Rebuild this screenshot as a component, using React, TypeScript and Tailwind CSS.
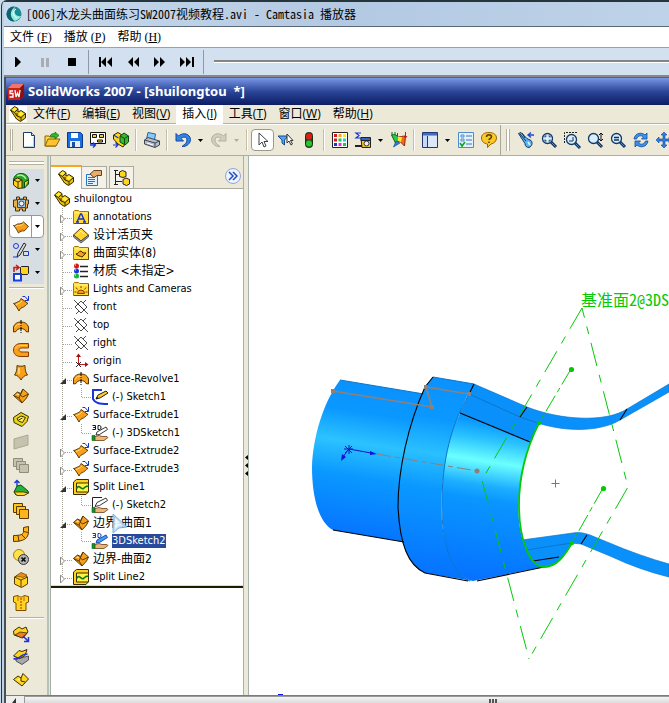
import { memo, type ReactNode } from "react";

const GOLD = "#ffc61a";
const ORANGE = "#f9a01b";
const EDGE = "#5a3a00";

const surface = (
    <>
        <path d="M.5 6.500c1.500.5 2.500-1 4-1.500 3 0 4.500-.5 6-2l5 4.500c-2 1-2.500 3.500-4.500 4.500-2-.5-4 .5-5.500 2C4.500 12 3 9 .5 6.500z" fill={ORANGE} stroke={EDGE} />
        <path d="M2.500 7.500L5 6.500c3 0 4.500-.5 5.500-2" stroke="#ffdc8a" fill="none" />
        <path d="M6 12c1.500-1 3-1.500 4.500-1" stroke="#d96f00" fill="none" />
    </>
);

const boundary = (
    <>
        <path d="M.5 7.500l4-3.500 3 1.500L10 1l5.500 5-2 4-4.500 5-3.500-3z" fill={ORANGE} stroke={EDGE} />
        <path d="M.5 7.500L6 10l4-9M6 10l3 4.500M4.500 4l5 5 6-3" fill="none" stroke={EDGE} />
        <path d="M3 7l2-2 1.500 2z" fill="#ffe08a" />
    </>
);

const revolve = (
    <>
        <path d="M.5 13V8c1-3.500 4-5 7.500-5s6.500 1.500 7.500 5v5l-2.500-.5c-.5-2-3-3-5-3s-4.500 1-5 3z" fill={ORANGE} stroke={EDGE} />
        <path d="M2 8.500C3.500 5.500 5.500 5 8 5" stroke="#ffe08a" fill="none" />
        <path d="M8 1v13" stroke="#000" strokeDasharray="4 1 1 1" />
    </>
);

const splitLine = (
    <>
        <path d="M.5 3l3-2.500h12v12l-2.500 3H.5z" fill="#ffd21f" stroke="#3a2c00" />
        <path d="M3.500 4h12v9h-12z" fill="#fff04a" stroke="#3a2c00" />
        <path d="M3.500 9.500c3-5 5 2 7 0s2-2.500 5-2.500" stroke="#0a7a1a" strokeWidth="1.600" fill="none" />
    </>
);

const partBlock = (
    <>
        <path d="M.5 4l4-3.500L8 2.500v3.500l3-1.500 4.500 3v4.500l-5 3.500-4-2.500z" fill="#e8bd0c" stroke="#352900" />
        <path d="M1.500 4L5 1.500 7 3 4 5.500zM8 8l3-2.500L14 8l-3 2.500z" fill="#ffee3a" />
        <path d="M.5 4l4 2.500L8 3M4.500 6.500L7 10l4 1.500 4.500-4M11 11.500v3.500M7 10V7" fill="none" stroke="#352900" />
    </>
);

const folder = (
    <>
        <path d="M.5 14.500v-12l1-1h4l1 1h9v12z" fill="#ffdd33" stroke="#a87900" />
        <path d="M1.500 4h13" stroke="#fff6a8" />
        <path d="M15.500 3v11.500H1" fill="none" stroke="#6b4c00" />
    </>
);

const hand = (
    <>
        <path d="M0 10.500h3v5H0z" fill="#0c9a2c" stroke="#035b15" strokeWidth=".6" />
        <path d="M3 11.500l4-1 3 1h5l1 1-4 3H3z" fill="#e9b77c" stroke="#6d3f12" strokeWidth=".8" />
    </>
);

const mark3d = (
    <path d="M.5.5h3v2h-2 2v2h-3M6 .5v4h1.500l1.500-1v-2l-1.500-1z" fill="none" stroke="currentColor" />
);

const lens = (
    <>
        <path d="M10 10l5 5" stroke="#12315f" strokeWidth="3" />
        <path d="M10.500 10.500l4 4" stroke="#4f8fd8" strokeWidth="1" />
        <circle cx="6.500" cy="6.500" r="5" fill="#d8eefc" stroke="#123a66" strokeWidth="1.300" />
    </>
);

const icons = {
    part: partBlock,
    surface,
    boundary,
    revolve,
    splitLine,
    extrude: (
        <>
            <path d="M.5 7.500c2 0 3.500-1.500 5-2 1.500-.5 2-1.500 2.500-3l7 5c-2 .5-2.500 2.500-4.500 3.500-2 .5-3.500 1.500-4.500 4C4.500 12.500 3 9.500.5 7.500z" fill={ORANGE} stroke={EDGE} />
            <path d="M3 8.500c2-.5 5-2 6-3.500" stroke="#ffdc8a" fill="none" />
            <path d="M9.500.5H12l3 3.500M15.500 0v4.500H12" fill="none" stroke="#1434c8" />
        </>
    ),
    annotations: (
        <>
            {folder}
            <path d="M4 13l3.500-8h1L12 13M5.500 10h5M3 13h3M10 13h3" fill="none" stroke="#1a2fd0" strokeWidth="1.400" />
        </>
    ),
    binder: (
        <>
            <path d="M.5 8L8 1l7.500 7L8 14z" fill="#ffd42e" stroke={EDGE} />
            <path d="M.5 8v2L8 16l7.500-6V8L8 14z" fill="#999" stroke="#444" strokeWidth=".8" />
            <path d="M4 8l4-4 3 3" stroke="#fff3a5" fill="none" />
        </>
    ),
    bodies: (
        <>
            {folder}
            <path d="M3 9c2 0 3-3 5-3 1 2 3 2 5 2-2 1-2 3-4 4-2-1-4-1-6-3z" fill={ORANGE} stroke="#3a2000" />
        </>
    ),
    material: (
        <>
            <circle cx="3.500" cy="3" r="2.500" fill="#d81818" />
            <circle cx="3.500" cy="8" r="2.500" fill="#2433d8" />
            <circle cx="3.500" cy="13" r="2.500" fill="#12b83a" />
            <path d="M7 3.500h8M7 8.500h8M7 13.500h8" stroke="#222" strokeWidth="1.500" />
            <path d="M2 2h1M2 7h1M2 12h1" stroke="#fff" />
        </>
    ),
    lights: (
        <>
            {folder}
            <path d="M4.500 12.500a3.500 3.500 0 017 0zM8 7V5M4.500 8.500l-1.500-2M11.500 8.500l1.500-2M3.500 11H1.500M12.500 11h2" fill="#ff9a1f" stroke="#8a3b00" />
        </>
    ),
    plane: (
        <path d="M1 1l14 14M8 2l6 6-6 6-6-6zM5 5l6 6M13 1l-3 3M3 15l3-3" fill="none" stroke="#222" strokeWidth=".8" />
    ),
    origin: (
        <>
            <path d="M5.500 11V2M6 11.500h8" stroke="#c41c1c" fill="none" />
            <path d="M3 4l2.500-3.500L8 4zM12 9l3.500 2.500L12 14z" fill="#9c1010" />
            <path d="M3 9l5 5M8 9l-5 5" stroke="#222" />
        </>
    ),
    sketchActive: (
        <>
            <path d="M10 1H1v9c2 4 6 5 15 5" fill="none" stroke="#1c36d6" strokeWidth="2" />
            <path d="M4 10l2-4 8-4 2 2-8 5z" fill="#ffc928" stroke="#222" />
            <path d="M4 10l1-2 1.500 1z" fill="#000" />
        </>
    ),
    sketch: (
        <>
            <path d="M10 .5H.5V11" fill="none" stroke="#222" />
            {hand}
            <path d="M3 9.500l2-4 9-4.500 1.500 2.500-8 5z" fill="#fff" stroke="#222" strokeWidth=".9" />
        </>
    ),
    sketch3d: (
        <g color="#111">
            {mark3d}
            {hand}
            <path d="M4 10l1-3 9-5 1.500 2.500-8 5z" fill="#fff" stroke="#222" strokeWidth=".9" />
        </g>
    ),
    sketch3dActive: (
        <g color="#1438a8">
            {mark3d}
            {hand}
            <path d="M4 10l1-3 9-5 1.500 2.500-8 5z" fill="#3aa0f8" stroke="#153ca8" strokeWidth=".9" />
        </g>
    ),
    newDoc: (
        <>
            <path d="M2.500.5h8l3 3v12h-11z" fill="#fff" stroke="#1f3b6e" />
            <path d="M10.500.5v3h3" fill="#bcd4f4" stroke="#1f3b6e" />
            <path d="M12.500 5v9.500h-9" fill="none" stroke="#b9d3ee" />
        </>
    ),
    open: (
        <>
            <path d="M1 14V4h4l1 1h6v9z" fill="#ffd84a" stroke="#8a6400" />
            <path d="M1 14l3-7h12l-4 7z" fill="#ffc230" stroke="#8a6400" />
            <path d="M6 4c1-2 3-3 5-2V0l4 3.500L11 7V5c-2-1-3 0-5-1z" fill="#2cbb2c" stroke="#08700e" strokeWidth=".7" />
        </>
    ),
    save: (
        <>
            <path d="M.5.5h13l2 2v13H.5z" fill="#1c6fe0" stroke="#0b3a8c" />
            <path d="M4 1h7v5H4z" fill="#fff" />
            <path d="M3 9h10v6H3z" fill="#e8eef8" />
            <path d="M5 10h3v5H5z" fill="#1c4ea8" />
        </>
    ),
    drawing: (
        <>
            <path d="M.5.5h15v11H.5z" fill="#fff" stroke="#111" />
            <path d="M2.500 2.500h4v3h-4zM9.500 2.500h4v3h-4zM7.500 8h5v2h-5z" fill="#ffd019" stroke="#111" />
            <path d="M0 13h5M3 10.500L5.500 13 3 15.500" stroke="#1639d8" fill="none" strokeWidth="1.400" />
        </>
    ),
    assembly: (
        <>
            <path d="M.5 3L5 .5 9 3v6l4 2-3 4-5-3-4.500-5z" fill="#ffd61f" stroke="#352900" />
            <path d="M7 4l4-3 4.500 3v6L12 13 7 10z" fill="#37b735" stroke="#0c4b10" />
            <path d="M7 4l4.500 2.500 4-2.500M11.500 6.500V13" fill="none" stroke="#0c4b10" />
            <path d="M.5 3l5 3M0 13h4M2.500 10.500L5 13l-2.500 2.500" stroke="#1639d8" fill="none" strokeWidth="1.200" />
        </>
    ),
    print: (
        <>
            <path d="M2.500 7L4 .5 11.500 2l-1 6z" fill="#8fc7f8" stroke="#2263a8" />
            <path d="M.5 8L4 5.500 15.500 9v4L11 15.500.5 12z" fill="#b7bec9" stroke="#3c4654" />
            <path d="M.5 8L11 11l4.500-2M11 11v4" stroke="#3c4654" fill="none" />
            <path d="M3 11l6 2" stroke="#fff" />
        </>
    ),
    undo: (
        <path d="M1 1.500v7.500h7.500L6 6.500C8 4.500 12 4.500 12 8c0 3-2 4-5 6.500C12 15 15.500 11 15.500 7.500 15 1.500 8 0 3.500 4z" fill="#2f85e8" stroke="#14479c" />
    ),
    redo: (
        <path d="M15 1.500v7.500H7.500L10 6.500C8 4.500 4 4.500 4 8c0 3 2 4 5 6.500C4 15 .5 11 .5 7.500 1 1.500 8 0 12.500 4z" fill="#d1ceba" stroke="#b3b09d" />
    ),
    select: (
        <path d="M4 1v12l3-3 2 5 2-1-2-4.500h4z" fill="#fff" stroke="#3b4046" />
    ),
    filter: (
        <>
            <path d="M0 4h10L6.500 8v5L4 11V8z" fill="#4ea5f2" stroke="#164a94" />
            <path d="M9 2v9l2-2 2 4 1.500-1-2-3.500H15z" fill="#fff" stroke="#333" />
        </>
    ),
    traffic: (
        <>
            <rect x="4.500" y=".5" width="7" height="15" rx="3" fill="#234b21" stroke="#19301a" />
            <circle cx="8" cy="4.500" r="3" fill="#e81b13" />
            <circle cx="8" cy="11.500" r="3" fill="#23c92b" />
        </>
    ),
    palette: (
        <>
            <path d="M.5.5h15v15H.5z" fill="#fff" stroke="#222" />
            <path d="M2 3.500h3M2 8h3" stroke="#d01b1b" strokeWidth="3" />
            <path d="M6.500 3.500h3" stroke="#ff9a1c" strokeWidth="3" />
            <path d="M11 3.500h3" stroke="#ffe81c" strokeWidth="3" />
            <path d="M6.500 8h3M11 12.500h3" stroke="#19c845" strokeWidth="3" />
            <path d="M11 8h3" stroke="#1bcdf0" strokeWidth="3" />
            <path d="M2 12.500h3" stroke="#2a2ce0" strokeWidth="3" />
            <path d="M6.500 12.500h3" stroke="#df2bdf" strokeWidth="3" />
        </>
    ),
    measure: (
        <>
            <path d="M6 1H1l3 2.500L1 6h5" fill="none" stroke="#1a35d6" strokeWidth="1.200" />
            <path d="M6 6.500h9.500v9H7z" fill="#fbc71c" stroke="#222" />
            <path d="M6 5.500h9.500v3H6z" fill="#2b66c8" stroke="#222" />
            <circle cx="11.500" cy="11.500" r="2.500" fill="#eee" stroke="#333" />
            <path d="M0 14h7" stroke="#222" strokeWidth="2" />
        </>
    ),
    analysis: (
        <>
            <path d="M.5 3c3-1 5 0 7 2l1 4-4 2z" fill="#2cc84a" stroke="#0b6a1d" />
            <path d="M7.500 5c2 0 4-1 7-1l-1 10-4-4-2-1z" fill="#f36b1c" stroke="#8c2600" />
            <path d="M7 5l4 0-1 5-3-1z" fill="#ffe52c" />
            <path d="M5 9l-2.500 6L9 11z" fill="#2480e8" stroke="#123f8c" strokeWidth=".6" />
            <path d="M1 0v3M4 0v3M6.500 1v3" stroke="#0b6a1d" />
            <path d="M14.500 0v6M13 4l1.500 2L16 4" stroke="#c81818" fill="none" />
        </>
    ),
    windowPane: (
        <>
            <path d="M.5.5h15v15H.5z" fill="#c6daf6" stroke="#24376e" />
            <path d="M1 1h14v2.500H1z" fill="#3f6dc2" />
            <path d="M5.500 4v11" stroke="#24376e" />
            <path d="M6 4h9v11H6z" fill="#dce8fa" />
        </>
    ),
    options: (
        <>
            <path d="M.5.5h15v15H.5z" fill="#e3f1fd" stroke="#4f8ccc" />
            <path d="M3 3h3v2H3zM3 7h3v2H3z" fill="none" stroke="#4f8ccc" />
            <path d="M8 4h6M8 8h6M8 12h6" stroke="#3b78bb" />
            <path d="M2 11l2 3 3-4" fill="none" stroke="#12a024" strokeWidth="1.600" />
        </>
    ),
    help: (
        <>
            <path d="M8 .5c5 0 7.500 2.500 7.500 5.500S13 11.500 10 12l-3.500 3.500V12C3 11.500.5 9.500.5 6S3 .5 8 .5z" fill="#fac827" stroke="#9a6800" />
            <path d="M5.500 5c0-3 5-3 5 0 0 1.500-2.500 1.500-2.500 3M8 9.500V11" fill="none" stroke="#5a3c00" strokeWidth="1.500" />
        </>
    ),
    torch: (
        <>
            <path d="M.5 1.500L3 .5l6 6 4 2c2 2 1 6-2 7-2 0-4-1-4-4z" fill="#5ab3f2" stroke="#12365f" />
            <path d="M2 2l6 7M4 1l3 5" stroke="#12365f" />
            <path d="M10 10l2 3" stroke="#e3f5ff" strokeWidth="1.500" />
            <path d="M16 3h-5.500M13 .5L10 3l3 2.500" stroke="#1b49d0" fill="none" strokeWidth="1.400" />
        </>
    ),
    zoomFit: (
        <>
            {lens}
            <path d="M4 5.500V4h1.500M7.500 4H9v1.500M9 7.500V9H7.500M5.500 9H4V7.500" fill="none" stroke="#12315f" />
        </>
    ),
    zoomArea: (
        <>
            <path d="M.5 11V.5H13" fill="none" stroke="#222" strokeDasharray="2 1" />
            <g transform="translate(1 1)">{lens}</g>
            <path d="M9 5v4H5" fill="none" stroke="#12315f" />
        </>
    ),
    zoomInOut: (
        <>
            {lens}
            <path d="M14 1v8M12 3l2-2 2 2M12 7l2 2 2-2" fill="none" stroke="#111" />
        </>
    ),
    zoomSel: (
        <>
            {lens}
            <path d="M4 5.500h5M4 8h5" stroke="#12315f" strokeWidth="1.500" />
        </>
    ),
    rotate: (
        <>
            <path d="M1 7C2 .5 9 0 12 3l2-2v6H8.500l2-2C8 3 5 3.500 3.500 7z" fill="#3b93ec" stroke="#124a9a" strokeWidth=".8" />
            <path d="M15 9c-1 6.500-8 7-11 4l-2 2V9h5.500l-2 2c2.500 2 5.500 1.500 7-2z" fill="#3b93ec" stroke="#124a9a" strokeWidth=".8" />
        </>
    ),
    pan: (
        <path d="M8 0l3 3H9v4h4V5l3 3-3 3V9H9v4h2l-3 3-3-3h2V9H3v2L0 8l3-3v2h4V3H5z" fill="#2f7fe0" stroke="#123f91" strokeWidth=".6" />
    ),
    features: (
        <>
            <path d="M.5 9C0 3 4 .5 8 .5c5 0 7.500 3 7.500 6.500v4l-4 4h-3V10z" fill="#29a52c" stroke="#0a4a0e" />
            <path d="M.5 7l4-2 4.500 2v8L5 15.500.5 12z" fill="#ffd21e" stroke="#3d2d00" />
            <path d="M.5 7L5 9l4-2M5 9v6" fill="none" stroke="#3d2d00" />
            <path d="M4 3c3-2 7-1 9 3" stroke="#b5f58c" strokeWidth="1.400" fill="none" />
            <path d="M11.500 15V9l4-2" stroke="#0a4a0e" fill="#ffd21e" />
        </>
    ),
    sheetMetal: (
        <>
            <path d="M.5 4h3V1h3v2h4V1h3v3h2v4h-1v4h-2v3h-3v-2h-3v2h-4v-4h-2z" fill="#eeb03c" stroke="#333" />
            <path d="M4.500 3.500h8v8h-8z" fill="#a4c6ea" stroke="#2a4876" />
            <circle cx="8.500" cy="7.500" r="2.500" fill="#eee" stroke="#444" />
        </>
    ),
    sketchTools: (
        <>
            <circle cx="3" cy="4" r="2.500" fill="none" stroke="#1d36d8" />
            <path d="M10.500 9.500h5v4h-5z" fill="none" stroke="#1d36d8" />
            <path d="M4 15l1-4 6-10 2 1.500L7 13z" fill="#ddd" stroke="#222" />
            <path d="M0 15h5" stroke="#1d36d8" />
        </>
    ),
    blocks: (
        <>
            <path d="M7.500 2.500l1-1h7v7l-1 1h-7z" fill="#ffd21e" stroke="#222" />
            <path d="M1 9h7v6.500H1z" fill="#fff" stroke="#1a3de0" strokeWidth="2" />
            <path d="M1 7V2.500h4M3 0l3 2.500L3 5" fill="none" stroke="#c81515" strokeWidth="1.500" />
        </>
    ),
    sweep: (
        <>
            <path d="M15.500 1.500H8c-5 0-7.500 3-7.500 6.500s2 6.500 7.500 6.500h7.500V10H9c-4 0-4-4 0-4h6.500z" fill={ORANGE} stroke="#8b3b00" />
            <path d="M14 3.500H8C4 3.500 3 5.500 2.500 7" fill="none" stroke="#ffd48a" />
        </>
    ),
    loft: (
        <>
            <path d="M4 .5c3 1 5 1 8 0 0 4 .5 7 2.500 9.500-3 0-5 2.500-6.500 5-1.500-2.500-3.500-5-6.500-5C3.500 7.500 4 4.500 4 .5z" fill={ORANGE} stroke={EDGE} />
            <path d="M6 3v6" stroke="#ffdc9a" strokeWidth="1.500" />
        </>
    ),
    offset: (
        <>
            <path d="M.5 6.500L8 1.500l7.500 4-1.500 5-5 5-8-4z" fill="#e8d41c" stroke="#3a3000" />
            <path d="M4 7.500l4-2.500 4.500 1.500-3 5-4-1.500z" fill="#ffef63" stroke="#3a3000" />
            <path d="M5.500 9l4-2" stroke="#3a3000" />
        </>
    ),
    planar: (
        <path d="M1 5l14-4v10L1 15z" fill="#c5c3ad" stroke="#aaa895" />
    ),
    knit: (
        <g fill="#c5c3ad" stroke="#8f8d7b">
            <path d="M.5 1.500h9v8h-9z" />
            <path d="M3.500 4.500h9v8h-9z" />
            <path d="M6.500 7.500h9v8h-9z" />
        </g>
    ),
    thicken: (
        <>
            <path d="M1 12l3-6 4-1 7 6 .5 2-4.500 2H3z" fill="#23b136" stroke="#0c4b17" />
            <path d="M1 12l3 3.500h7l4.500-2.500-5-1z" fill="#ffd61f" stroke="#3d2d00" strokeWidth=".8" />
            <path d="M4 6V1M1.500 3L4 .5 6.500 3" fill="none" stroke="#1737dc" strokeWidth="1.400" />
        </>
    ),
    stack: (
        <g fill={GOLD} stroke={EDGE}>
            <path d="M.5.5h9v9h-9z" />
            <path d="M3.500 3.500h9v8h-9z" />
            <path d="M6.500 6.500h9v9h-9z" fill="#ffb31c" />
        </g>
    ),
    bend: (
        <>
            <path d="M15.500.5l-5 1v4c0 3-3 4-10 4v6c10 0 15-3 15-10z" fill="#ffb31c" stroke={EDGE} />
            <path d="M10.500 5.500l5 1M8.500 8.500l4 4M5 9.500l1 6" stroke={EDGE} />
        </>
    ),
    deleteFace: (
        <>
            <circle cx="6" cy="6" r="5.500" fill="#ffe24a" stroke="#a88000" />
            <circle cx="10.500" cy="10.500" r="5" fill="#b5b5b5" stroke="#333" />
            <path d="M8.500 8.500l4 4M12.500 8.500l-4 4" stroke="#000" strokeWidth="1.500" />
        </>
    ),
    box: (
        <>
            <path d="M1.500 5l7-4 6 4v7l-6 3.500-7-3.500z" fill="#ffd31f" stroke={EDGE} />
            <path d="M1.500 5L8 8l6.500-3M8 8v7" fill="none" stroke={EDGE} />
            <path d="M3 4l5-3.500L14 3l-4 2.500z" fill="#f48a1a" stroke={EDGE} strokeWidth=".6" />
        </>
    ),
    shirt: (
        <>
            <path d="M.5 1.500L5 .5c2 2 4 2 6 0l4.500 1V7L13 8v7.500H3V8L.5 7z" fill="#ffd61f" stroke="#7b4b00" />
            <path d="M8 3v12" stroke="#cf5c00" strokeWidth="1.500" strokeDasharray="2 1" />
            <path d="M5 1v5M11 1v5" stroke="#cf5c00" />
        </>
    ),
    extend: (
        <>
            <path d="M.5 5L6 1l3 2 4-2 2 5-5 6-9-3z" fill="#ffd61f" stroke="#3d2d00" />
            <path d="M2 9l5-3 7 1-5 5z" fill="#f07f1c" stroke="#3d2d00" strokeWidth=".8" />
            <path d="M10 10l5 5M15.500 11v4.500H11" fill="none" stroke="#2433d8" strokeWidth="1.500" />
        </>
    ),
    trim: (
        <>
            <path d="M3 8l5 1 7.500-2v4L9 15.500 3 12z" fill="#a8a8a8" stroke="#555" />
            <path d="M.5 7L6 1.500l3 1 5-2-2 6-5 3z" fill="#ffd61f" stroke="#3d2d00" />
            <path d="M.5 9.500c6 3 5-4.500 14-4.500" fill="none" stroke="#2433d8" strokeWidth="1.500" />
        </>
    ),
    untrim: (
        <>
            <path d="M.5 7.500L5 4l3 2 2-4.500 5.500 5.500L9 14z" fill="#ffd61f" stroke="#3d2d00" />
            <path d="M8 6v3l4 1" fill="none" stroke="#3d2d00" />
            <path d="M4 8l3-2v3z" fill="#fff59a" />
        </>
    ),
    props: (
        <>
            <path d="M.5 4.500h11v11H.5z" fill="#e2f1ff" stroke="#2573c4" />
            <path d="M2 7.500h7M2 9.500h7M2 11.500h7M2 13.500h5" stroke="#2573c4" />
            <path d="M4 4l4-3.500h7.500v5H11L8 7.500z" fill="#e5ad72" stroke="#6d3f12" />
        </>
    ),
    config: (
        <>
            <path d="M1.500 0v15M1 4.500h6M1 11.500h7M0 .5h4M0 14.500h4" stroke="#222" fill="none" />
            <path d="M5.500 2l3-1.500 3.500 1.500v4.500l-3 1-3.500-1zM9 9.500L12 8l3.500 1.500v4.500l-3 1.500L9 14z" fill="#ffd61f" stroke="#222" />
        </>
    ),
    play: <path d="M5 3h1l5 5-5 5H5z" fill="#000" />,
    pause: <path d="M4 4h3v9H4zM9 4h3v9H9z" fill="#a9adb3" />,
    stop: <path d="M4 4h8v8H4z" fill="#000" />,
    first: <path d="M1 3h2v10H1zM8 3v10L3 8zM14 3v10L9 8z" fill="#000" />,
    rewind: <path d="M8 3v10L3 8zM14 3v10L9 8z" fill="#000" />,
    forward: <path d="M2 3v10l5-5zM8 3v10l5-5z" fill="#000" />,
    last: <path d="M1 3v10l5-5zM7 3v10l5-5zM13 3h2v10h-2z" fill="#000" />,
} satisfies Record<string, ReactNode>;

type IconName = keyof typeof icons;

function Icon({ name }: { name: IconName }) {
    return (
        <svg viewBox="0 0 16 16" className="size-4 shrink-0 overflow-visible" aria-hidden="true">
            {icons[name]}
        </svg>
    );
}

function Caret() {
    return (
        <svg viewBox="0 0 5 3" className="h-[3px] w-[5px]" aria-hidden="true">
            <path d="M0 0h5L2.500 3z" fill="#000" />
        </svg>
    );
}

function ToolSep() {
    return (
        <div className="flex h-[22px] w-2 shrink-0 justify-center">
            <div className="w-px bg-[#c2bfac]" />
            <div className="w-px bg-white" />
        </div>
    );
}

interface Tool {
    icon?: IconName;
    label?: string;
    menu?: boolean;
    active?: boolean;
}

const mainTools: Tool[] = [
    { icon: "newDoc", label: "New" },
    { icon: "open", label: "Open" },
    { icon: "save", label: "Save" },
    { icon: "drawing", label: "Make drawing" },
    { icon: "assembly", label: "Make assembly" },
    {},
    { icon: "print", label: "Print" },
    {},
    { icon: "undo", label: "Undo", menu: true },
    { icon: "redo", label: "Redo", menu: true },
    {},
    { icon: "select", label: "Select", active: true },
    { icon: "filter", label: "Selection filter" },
    { icon: "traffic", label: "Rebuild" },
    {},
    { icon: "palette", label: "Edit color" },
    { icon: "measure", label: "Measure", menu: true },
    { icon: "analysis", label: "Analysis" },
    {},
    { icon: "windowPane", label: "Window", menu: true },
    { icon: "options", label: "Options" },
    { icon: "help", label: "Help" },
];

const viewTools: Tool[] = [
    { icon: "torch", label: "Previous view" },
    { icon: "zoomFit", label: "Zoom to fit" },
    { icon: "zoomArea", label: "Zoom to area" },
    { icon: "zoomInOut", label: "Zoom in/out" },
    { icon: "zoomSel", label: "Zoom to selection" },
    { icon: "rotate", label: "Rotate view" },
    { icon: "pan", label: "Pan" },
];

function ToolRow({ tools }: { tools: Tool[] }) {
    return (
        <>
            {tools.map((tool, i) =>
                tool.icon ? (
                    <div key={i} className="flex shrink-0">
                        <button
                            aria-label={tool.label}
                            className={
                                tool.active
                                    ? "flex h-[22px] w-[23px] items-center justify-center rounded-sm border border-[#9a9a8c] bg-white"
                                    : "flex h-[22px] w-[23px] items-center justify-center"
                            }
                        >
                            <Icon name={tool.icon} />
                        </button>
                        {tool.menu && (
                            <button
                                aria-label={`${tool.label} menu`}
                                className={
                                    tool.icon === "redo"
                                        ? "flex w-[13px] items-center justify-center opacity-25"
                                        : "flex w-[13px] items-center justify-center"
                                }
                            >
                                <Caret />
                            </button>
                        )}
                    </div>
                ) : (
                    <ToolSep key={i} />
                )
            )}
        </>
    );
}

const sideGroups: { icon: IconName; label: string; active?: boolean }[] = [
    { icon: "features", label: "Features" },
    { icon: "sheetMetal", label: "Sheet metal" },
    { icon: "surface", label: "Surfaces", active: true },
    { icon: "sketchTools", label: "Sketch" },
    { icon: "blocks", label: "Blocks" },
];

const sideTools: IconName[] = [
    "extrude",
    "revolve",
    "sweep",
    "loft",
    "boundary",
    "offset",
    "planar",
    "knit",
    "thicken",
    "stack",
    "bend",
    "deleteFace",
    "box",
    "shirt",
];

const sideEditTools: IconName[] = ["extend", "trim", "untrim"];

interface TreeNode {
    icon: IconName;
    label: string;
    level: 1 | 2;
    open?: boolean;
    selected?: boolean;
    cjk?: boolean;
}

const treeNodes: TreeNode[] = [
    { icon: "annotations", label: "annotations", level: 1, open: false },
    { icon: "binder", label: "设计活页夹", level: 1, open: false, cjk: true },
    { icon: "bodies", label: "曲面实体(8)", level: 1, open: false, cjk: true },
    { icon: "material", label: "材质 <未指定>", level: 1, cjk: true },
    { icon: "lights", label: "Lights and Cameras", level: 1, open: false },
    { icon: "plane", label: "front", level: 1 },
    { icon: "plane", label: "top", level: 1 },
    { icon: "plane", label: "right", level: 1 },
    { icon: "origin", label: "origin", level: 1 },
    { icon: "revolve", label: "Surface-Revolve1", level: 1, open: true },
    { icon: "sketchActive", label: "(-) Sketch1", level: 2 },
    { icon: "extrude", label: "Surface-Extrude1", level: 1, open: true },
    { icon: "sketch3d", label: "(-) 3DSketch1", level: 2 },
    { icon: "extrude", label: "Surface-Extrude2", level: 1, open: false },
    { icon: "extrude", label: "Surface-Extrude3", level: 1, open: false },
    { icon: "splitLine", label: "Split Line1", level: 1, open: true },
    { icon: "sketch", label: "(-) Sketch2", level: 2 },
    { icon: "boundary", label: "边界-曲面1", level: 1, open: true, cjk: true },
    { icon: "sketch3dActive", label: "3DSketch2", level: 2, selected: true },
    { icon: "boundary", label: "边界-曲面2", level: 1, open: false, cjk: true },
    { icon: "splitLine", label: "Split Line2", level: 1, open: false },
];

function labelClass(node: TreeNode) {
    if (node.selected) return "ml-1 bg-[#264a9c] leading-[14px] whitespace-nowrap text-white";
    if (node.cjk) return "ml-1 text-xs leading-[14px] whitespace-nowrap";
    return "ml-1 leading-[14px] whitespace-nowrap";
}

function Branch({ node, last }: { node: TreeNode; last: boolean }) {
    return (
        <svg
            viewBox="0 0 19 18"
            className="h-[18px] w-[19px] shrink-0"
            fill="none"
            stroke="#a8a49a"
            strokeDasharray="1 1"
            aria-hidden="true"
        >
            <path d={last ? "M8.500 0v10" : "M8.500 0v18"} />
            {node.level === 1 && <path d="M9 10.500h10" />}
            {node.open === false && (
                <path d="M6.500 7v8l4-4z" fill="#fff" stroke="#8b8b8b" strokeDasharray="none" />
            )}
            {node.open === true && <path d="M12 8v6H6z" fill="#333" stroke="none" />}
        </svg>
    );
}

const TreeRow = memo(function TreeRow({ node, last }: { node: TreeNode; last: boolean }) {
    return (
        <li
            role="treeitem"
            aria-expanded={node.open}
            aria-selected={!!node.selected}
            className="relative flex h-[18px] items-center"
        >
            <Branch node={node} last={last} />
            {node.level === 2 && (
                <svg
                    viewBox="0 0 19 18"
                    className="h-[18px] w-[19px] shrink-0"
                    fill="none"
                    stroke="#a8a49a"
                    strokeDasharray="1 1"
                    aria-hidden="true"
                >
                    <path d="M8.500 0v10M9 9.500h10" />
                </svg>
            )}
            <Icon name={node.icon} />
            <button className={labelClass(node)}>{node.label}</button>
            {node.label === "边界-曲面1" && (
                <svg viewBox="0 0 18 20" className="absolute top-0 left-14 z-10 h-5 w-[18px] opacity-90" aria-hidden="true">
                    <path d="M3 0l14 13-8 1-6 5z" fill="#b9dcf6" stroke="#6ea8dc" />
                    <path d="M5 4l7 7-4 1-3 3z" fill="#e9f6ff" />
                </svg>
            )}
        </li>
    );
});

function Menu({ items }: { items: { text: string; hotkey: string; active?: boolean }[] }) {
    return (
        <>
            {items.map((item) => (
                <button
                    key={item.text}
                    className={
                        item.active
                            ? "h-[19px] bg-white px-1.5 whitespace-nowrap"
                            : "h-[19px] px-1.5 whitespace-nowrap"
                    }
                >
                    {item.text}(<u>{item.hotkey}</u>)
                </button>
            ))}
        </>
    );
}

function PlayerButtons({ names }: { names: IconName[] }) {
    return (
        <>
            {names.map((name) => (
                <button key={name} aria-label={name} className="flex h-6 w-[27px] shrink-0 items-center justify-center">
                    <Icon name={name} />
                </button>
            ))}
        </>
    );
}

function SideButtons({ names }: { names: IconName[] }) {
    return (
        <>
            {names.map((name) => (
                <button key={name} aria-label={name} className="flex h-[23px] w-6 items-center justify-center">
                    <Icon name={name} />
                </button>
            ))}
        </>
    );
}

function Model() {
    return (
        <svg
            viewBox="249 156 420 539"
            preserveAspectRatio="xMinYMin meet"
            className="h-[539px] w-full"
            role="img"
            aria-label="shuilongtou"
        >
            <defs>
                <linearGradient id="barrel" gradientUnits="userSpaceOnUse" x1="372" y1="386" x2="348" y2="538">
                    <stop offset="0" stopColor="#0a92ff" />
                    <stop offset=".18" stopColor="#0a98ff" />
                    <stop offset=".38" stopColor="#2cc2ff" />
                    <stop offset=".6" stopColor="#0a98ff" />
                    <stop offset="1" stopColor="#0672ff" />
                </linearGradient>
                <linearGradient id="collar" gradientUnits="userSpaceOnUse" x1="450" y1="380" x2="422" y2="575">
                    <stop offset="0" stopColor="#0a92ff" />
                    <stop offset=".2" stopColor="#0a98ff" />
                    <stop offset=".38" stopColor="#2ac0ff" />
                    <stop offset=".56" stopColor="#0a98ff" />
                    <stop offset="1" stopColor="#0672ff" />
                </linearGradient>
                <linearGradient id="cone" gradientUnits="userSpaceOnUse" x1="506" y1="408" x2="480" y2="580">
                    <stop offset="0" stopColor="#0a92ff" />
                    <stop offset=".1" stopColor="#0a9aff" />
                    <stop offset=".2" stopColor="#2cc4ff" />
                    <stop offset=".32" stopColor="#6cffff" />
                    <stop offset=".46" stopColor="#1caeff" />
                    <stop offset=".54" stopColor="#0a96ff" />
                    <stop offset="1" stopColor="#0672ff" />
                </linearGradient>
            </defs>

            {/* spout, upper and lower walls */}
            <path d="M474 384L527 407C560 420 605 423 627 409L669 384V392L620 420C600 432 565 432 538 423L530 442L460 413Z" fill="#0a90fb" stroke="#0877cc" strokeWidth=".7" />
            <path d="M522 540L573 533C580 532 584 533 590 535L607 542Q640 556 669 564V577Q640 570 610 556L581 544L572 543C565 556 555 567 544 567C534 567 527 557 522 540Z" fill="#0a90fb" stroke="#0877cc" strokeWidth=".7" />
            <path d="M527 550Q550 546 572 543" fill="none" stroke="#0877cc" />

            {/* body */}
            <path d="M340 380L424 394C405 430 393 500 404 542L333 530C318 522 312 495 312 467C313 437 323 403 340 380Z" fill="url(#barrel)" />
            <path d="M433 377L474 384C448 425 437 490 443 530C448 560 458 577 473 581L425 573C408 565 400 545 398 507C398 470 408 425 425 387Z" fill="url(#collar)" />
            <path d="M460 413L530 442C521 465 517 500 519 520C521 545 532 565 544 567L473 581C450 575 442 545 442 500C442 470 448 438 460 413Z" fill="url(#cone)" />
            <path d="M474 384L469 394C448 430 441 470 442 513C443 548 454 576 470 581" fill="none" stroke="#0877cc" />
            <path d="M469 394L520 417L538 423" fill="none" stroke="#0877cc" />
            <path d="M340 380L424 394M433 377L474 384" stroke="#0877cc" />
            <g fill="none" stroke="#000" strokeWidth="1.100">
                <path d="M433 377L425 387C408 425 398 470 398 507C400 545 408 565 425 573L468 581" />
                <path d="M333 530L404 542M477 581L544 567M460 413L530 442M474 384L469 394M527 407L520 417M627 409L620 420M587 535L581 544M533 561L559 557" />
            </g>

            {/* sketch profile */}
            <path d="M333 391L432 407L426 387L469 394" fill="none" stroke="#8f8078" strokeWidth="1.600" />
            <path d="M331 389h4v4h-4zM430 405h4v4h-4zM424 385h4v4h-4zM467 392h4v4h-4z" fill="#8f8078" />
            <path d="M377 454L477 471" stroke="#8f8078" strokeDasharray="14 4 5 4" />
            <circle cx="477" cy="471" r="2.500" fill="#8f7f7a" />
            <path d="M344 449h9M349 445v9M345 446l7 7M352 446l-7 7M349 449l22 4M348 450l-5 7" stroke="#0a14c8" />
            <path d="M377 454l-7-3v4zM341 461l1-7 4 3z" fill="#0a14e0" />

            {/* reference plane and opening */}
            <g fill="none" stroke="#06c806">
                <path d="M582 308L482 480L529 659" strokeDasharray="24 9 8 9" />
                <path d="M582 308L628 487L529 659" strokeDasharray="24 9 8 9" strokeDashoffset="14" />
                <path d="M571 369L539 423M603 488L572 543" strokeDasharray="18 4 5 4" />
                <path d="M551.500 483.500h8M555.500 479.500v8" />
                <path d="M539 423C527 447 519 475 519 505C519 540 530 567 544 567C557 567 565 555 572 543" strokeWidth="1.800" />
            </g>
            <g fill="#06c806">
                <circle cx="571.500" cy="369.500" r="2.600" />
                <circle cx="603.500" cy="488.500" r="2.600" />
                <circle cx="539" cy="423" r="2.200" />
                <circle cx="572" cy="543" r="2.200" />
                <text x="581" y="306" className="font-['Noto_Sans_Mono_CJK_SC','Noto_Sans_CJK_SC',monospace] text-base">
                    基准面2@3DS
                </text>
            </g>
            <path d="M278 694.500h5" stroke="#0a14e0" />
        </svg>
    );
}

export default function App() {
    return (
        <div className="min-h-screen bg-[#c9dbe6] pl-px">
            <div className="flex min-h-screen flex-col overflow-hidden rounded-tl-md border-l border-[#26343c] bg-[#bcd0e6] pl-[2px] font-['DejaVu_Sans_Condensed','Noto_Sans_CJK_SC',sans-serif] text-[11px] text-black">
                <header className="text-xs">
                    <div className="flex h-[27px] items-center gap-1 border-t-2 border-b border-t-[#26343c] border-b-[#5b6878] bg-linear-to-r from-[#c9daec] via-[#b3c9e2] via-50% to-[#bed3e9] pl-[2px]">
                        <svg viewBox="0 0 16 16" className="size-4 shrink-0" aria-hidden="true">
                            <circle cx="8" cy="8" r="7.500" fill="#1a8c94" />
                            <path d="M8 .5a7.500 7.500 0 100 15C4 11 4 5 8 .5z" fill="#0d6470" />
                            <path d="M9 1c-6 4-5 11 0 14 3-1 5-3 6-5-5 1-8-3-6-9z" fill="#9ceadf" />
                            <path d="M10 3c-4 3-3 7 1 9" fill="none" stroke="#fff" />
                        </svg>
                        <h1 className="font-['Noto_Sans_Mono_CJK_SC','Noto_Sans_CJK_SC',monospace] whitespace-nowrap">
                            [006]水龙头曲面练习SW2007视频教程.avi - Camtasia 播放器
                        </h1>
                    </div>
                    <nav
                        className="flex h-[21px] items-center gap-3 border-b border-[#a0a0a0] bg-white pl-1.5 font-['Liberation_Serif','Noto_Sans_CJK_SC',serif]"
                        aria-label="Player"
                    >
                        <button className="whitespace-nowrap">文件 (<u>F</u>)</button>
                        <button className="whitespace-nowrap">播放 (<u>P</u>)</button>
                        <button className="whitespace-nowrap">帮助 (<u>H</u>)</button>
                    </nav>
                    <div className="flex h-[29px] items-center border-b-2 border-[#888] bg-[#d3e0f0]">
                        <PlayerButtons names={["play", "pause", "stop"]} />
                        <div className="mx-[3px] h-6 w-px shrink-0 bg-[#8e98a6]" />
                        <PlayerButtons names={["first", "rewind", "forward", "last"]} />
                        <div className="mr-[10px] ml-[3px] h-6 w-px shrink-0 bg-[#8e98a6]" />
                        <input
                            type="range"
                            aria-label="Position"
                            defaultValue={0}
                            className="h-[3px] min-w-0 flex-1 appearance-none border-b border-b-white bg-[#858585] [&::-webkit-slider-thumb]:opacity-0"
                        />
                    </div>
                </header>

                <div className="flex flex-1 flex-col border-l-2 border-[#4a5058] bg-[#ece9d8]">
                    <div className="flex h-7 items-center gap-1 border-t border-[#4060c0] bg-linear-to-b from-[#7b96e6] via-[#2c4698] via-50% to-[#0b1c63] pl-[2px]">
                        <svg viewBox="0 0 16 16" className="size-4 shrink-0" aria-hidden="true">
                            <path d="M0 4l4-4h12v12l-4 4H0z" fill="#c8201c" />
                            <path d="M0 4l4-4h12l-4 4z" fill="#f0766a" />
                            <path d="M12 4l4-4v12l-4 4z" fill="#8c100e" />
                            <path d="M5 7H2v2.500h3V13H1.500M7 6l1 7 1.500-4L11 13l1-7" fill="none" stroke="#fff" strokeWidth="1.300" />
                        </svg>
                        <h2 className="font-['Noto_Sans','Noto_Sans_CJK_SC',sans-serif] text-[13px] font-bold whitespace-pre text-white">
                            SolidWorks 2007 - [shuilongtou  *]
                        </h2>
                    </div>

                    <nav
                        className="flex h-[19px] items-center border-b border-[#b5b2a0] pl-[3px] font-['Open_Sans','Noto_Sans_CJK_SC',sans-serif] text-xs"
                        aria-label="SolidWorks"
                    >
                        <span className="bg-white px-px">
                            <Icon name="part" />
                        </span>
                        <Menu
                            items={[
                                { text: "文件", hotkey: "F" },
                                { text: "编辑", hotkey: "E" },
                                { text: "视图", hotkey: "V" },
                                { text: "插入", hotkey: "I", active: true },
                                { text: "工具", hotkey: "T" },
                                { text: "窗口", hotkey: "W" },
                                { text: "帮助", hotkey: "H" },
                            ]}
                        />
                    </nav>

                    <div className="flex h-8 items-center border-t border-b border-t-white border-b-[#9db3ae] pl-1">
                        <div className="mr-1 h-[22px] w-[3px] shrink-0 border-x border-[#b5b2a0] bg-white" />
                        <ToolRow tools={mainTools} />
                        <div className="h-full w-px shrink-0 bg-[#a9a797]" />
                        <div className="mr-1 ml-[5px] h-[22px] w-[4px] shrink-0 border-x border-[#b5b2a0] bg-white" />
                        <ToolRow tools={viewTools} />
                    </div>

                    <main className="flex flex-1">
                        <aside className="flex w-[43px] shrink-0 flex-col border-r-2 border-[#b3c2bd] pl-[3px]" aria-label="Surface tools">
                            <div className="mt-[5px] mb-1 h-[4px] w-[35px] border-y border-[#b5b2a0] bg-white" />
                            <div className="w-[35px] bg-[#d6dee4]">
                                {sideGroups.map((g) => (
                                    <div
                                        key={g.icon}
                                        className={
                                            g.active
                                                ? "flex h-[23px] rounded-sm border border-[#9a9a8c] bg-white"
                                                : "flex h-[23px] border border-transparent"
                                        }
                                    >
                                        <button
                                            aria-label={g.label}
                                            className={
                                                g.active
                                                    ? "flex w-[22px] items-center justify-center border-r border-[#9a9a8c]"
                                                    : "flex w-[22px] items-center justify-center border-r border-transparent"
                                            }
                                        >
                                            <Icon name={g.icon} />
                                        </button>
                                        <button aria-label={`${g.label} menu`} className="flex flex-1 items-center justify-center">
                                            <Caret />
                                        </button>
                                    </div>
                                ))}
                            </div>
                            <div className="my-[3px] h-[2px] w-[35px] border-b border-b-white bg-[#b5b2a0]" />
                            <SideButtons names={sideTools} />
                            <div className="my-[3px] h-[2px] w-[35px] border-b border-b-white bg-[#b5b2a0]" />
                            <SideButtons names={sideEditTools} />
                        </aside>

                        <section className="ml-px flex w-[193px] shrink-0 flex-col border-l border-[#a9aaa0]">
                            <div className="flex h-[33px] items-end border-b border-[#a9aaa0]" role="tablist">
                                <button
                                    role="tab"
                                    aria-selected="true"
                                    aria-label="Feature tree"
                                    className="-mb-px flex h-6 w-[31px] items-center justify-center border-t-2 border-r border-t-[#f7a51e] border-r-[#a9aaa0] bg-white"
                                >
                                    <Icon name="part" />
                                </button>
                                <button
                                    role="tab"
                                    aria-label="Properties"
                                    className="mr-0.5 flex h-[22px] w-[25px] items-center justify-center border-t border-r border-[#a9aaa0] bg-[#f4f2e8]"
                                >
                                    <Icon name="props" />
                                </button>
                                <button
                                    role="tab"
                                    aria-label="Configurations"
                                    className="flex h-[22px] w-[25px] items-center justify-center border border-b-0 border-[#a9aaa0] bg-[#f4f2e8]"
                                >
                                    <Icon name="config" />
                                </button>
                                <button
                                    aria-label="Expand"
                                    className="mr-[2px] mb-1 ml-auto flex size-4 items-center justify-center rounded-full border border-[#8fa6d8] bg-[#eef3fd]"
                                >
                                    <svg viewBox="0 0 10 10" className="size-[10px]" fill="none" stroke="#1f4fc4" strokeWidth="1.500" aria-hidden="true">
                                        <path d="M1 1l4 4-4 4M5 1l4 4-4 4" />
                                    </svg>
                                </button>
                            </div>
                            <div className="flex-1 bg-white">
                                <ul role="tree" className="pt-px pl-[3px]">
                                    <li role="treeitem" aria-selected="false" className="flex h-[18px] items-center">
                                        <Icon name="part" />
                                        <button className="ml-1 leading-[14px]">shuilongtou</button>
                                    </li>
                                    {treeNodes.map((node, i) => (
                                        <TreeRow key={node.label} node={node} last={i === treeNodes.length - 1} />
                                    ))}
                                </ul>
                                {/* rollback bar */}
                                <div className="relative -mt-px h-[3px] border-b-2 border-[#1d1d00] bg-[#fff000]" />
                            </div>
                        </section>

                        <div className="flex w-[6px] shrink-0 flex-col items-center justify-center border-x border-[#a3b2ad]">
                            <div className="h-20" />
                            <svg viewBox="0 0 4 22" className="h-[22px] w-1" aria-hidden="true">
                                <path d="M4 0v5L1 2.500zM4 8v5L1 10.500zM4 16v5L1 18.500z" fill="#000" />
                            </svg>
                        </div>

                        <section className="min-w-0 flex-1 bg-white">
                            <Model />
                        </section>
                    </main>

                    <div className="flex h-2 items-start border-t border-[#7c7c7c] bg-[#eeeeee]">
                        <svg viewBox="0 0 18 7" className="h-[7px] w-[18px] shrink-0" aria-hidden="true">
                            <path d="M10 2v5H6z" fill="#333" />
                        </svg>
                        <div className="flex h-[7px] flex-1 border-t border-l border-[#999] bg-linear-to-b from-[#f4f4f4] to-[#dcdcdc]">
                            <div className="w-[72%]" />
                            <div className="mt-[2px] h-1 w-[8px] border-x-2 border-[#555] px-px">
                                <div className="mx-auto h-full w-[2px] bg-[#555]" />
                            </div>
                        </div>
                    </div>
                </div>
            </div>
        </div>
    );
}
